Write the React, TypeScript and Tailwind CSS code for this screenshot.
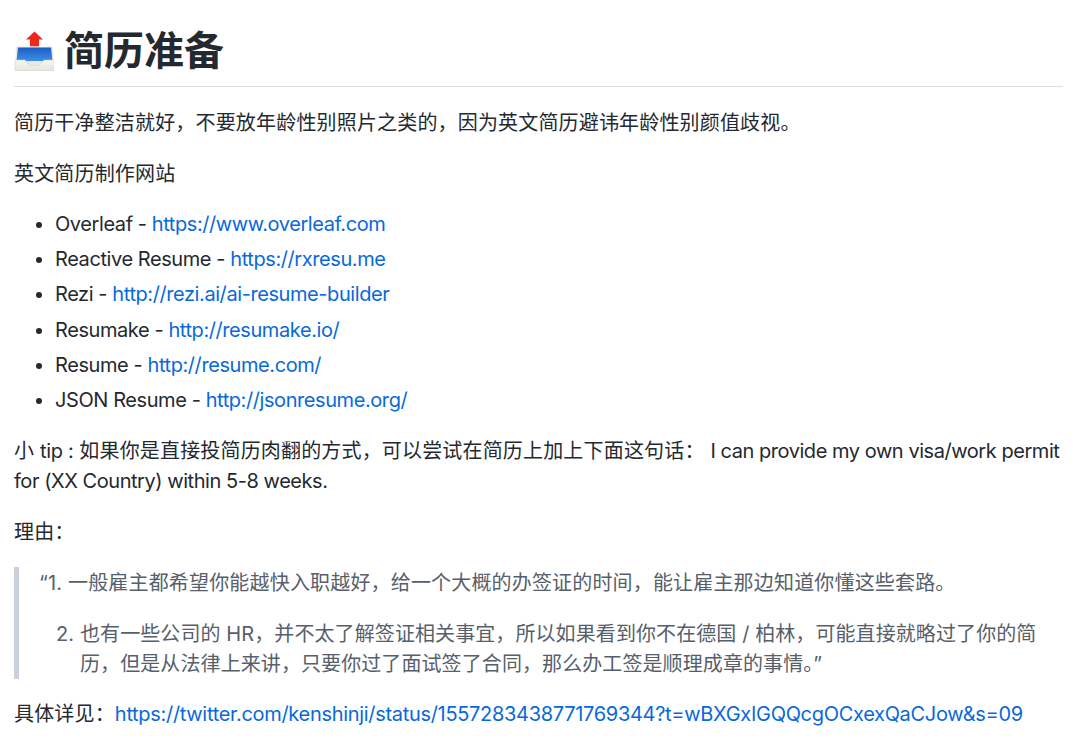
const font = { fontFamily: '"Inter", "Noto Sans CJK SC", sans-serif' };

const sites = [
  ["Overleaf", "https://www.overleaf.com"],
  ["Reactive Resume", "https://rxresu.me"],
  ["Rezi", "http://rezi.ai/ai-resume-builder"],
  ["Resumake", "http://resumake.io/"],
  ["Resume", "http://resume.com/"],
  ["JSON Resume", "http://jsonresume.org/"],
];

function InboxIcon() {
  return (
    <svg width="40" height="40" viewBox="0 0 40 40" className="shrink-0">
      <defs>
        <linearGradient id="tray" x1="0" y1="0" x2="0" y2="1">
          <stop offset="0" stopColor="#1b5cc4" />
          <stop offset="1" stopColor="#3f8fe6" />
        </linearGradient>
        <linearGradient id="front" x1="0" y1="0" x2="0" y2="1">
          <stop offset="0" stopColor="#f8f8f4" />
          <stop offset="1" stopColor="#e6e6de" />
        </linearGradient>
      </defs>
      <path d="M20.5 0.5 L29 8.5 H25 V15.5 H16 V8.5 H12 Z" fill="#f0261c" />
      <path d="M2 15.5 H39 L40 39.5 H1 Z" fill="#e9e9e2" />
      <path d="M4 16.5 H37 L38.5 30 H2.5 Z" fill="url(#tray)" />
      <path d="M1 29 H11 L15.5 34.5 H25.5 L30 29 H40 V39.5 H1 Z" fill="url(#front)" stroke="#cfcfc6" strokeWidth="0.5" />
    </svg>
  );
}

export default function App() {
  return (
    <div className="w-[1080px] h-[755px] bg-white overflow-hidden pl-[14px] pr-[17px] text-[20px] leading-[30px] tracking-[0.17px] text-[#24292f]" style={font}>
      <div className="flex items-center gap-[10px] h-[87px] border-b border-[#d8dee4] pt-[15px]">
        <InboxIcon />
        <h1 className="text-[40px] leading-[50px] font-semibold tracking-normal">简历准备</h1>
      </div>
      <p className="mt-[21px]">简历干净整洁就好，不要放年龄性别照片之类的，因为英文简历避讳年龄性别颜值歧视。</p>
      <p className="mt-[21px]">英文简历制作网站</p>
      <ul className="mt-[20px] list-disc pl-[41px] tracking-[-0.42px]">
        {sites.map(([name, url]) => (
          <li key={name} className="mb-[5.2px]">
            {name} - <a className="text-[#0969da]">{url}</a>
          </li>
        ))}
      </ul>
      <p className="mt-[21px]">
        小 <span className="tracking-[-0.3px]">tip :</span> 如果你是直接投简历肉翻的方式，可以尝试在简历上加上下面这句话： <span className="tracking-[-0.45px]">I can provide my own visa/work permit for (XX Country) within 5-8 weeks.</span>
      </p>
      <p className="mt-[21px]">理由：</p>
      <blockquote className="mt-[20px] border-l-[5px] border-[#c9d2dc] pl-[20px] pt-px text-[#57606a]">
        <p>“1. 一般雇主都希望你能越快入职越好，给一个大概的办签证的时间，能让雇主那边知道你懂这些套路。</p>
        <div className="mt-[21px] flex pl-[17px] tracking-[0.09px]">
          <span className="w-[24px] shrink-0">2.</span>
          <p>也有一些公司的 HR，并不太了解签证相关事宜，所以如果看到你不在德国 / 柏林，可能直接就略过了你的简历，但是从法律上来讲，只要你过了面试签了合同，那么办工签是顺理成章的事情。”</p>
        </div>
      </blockquote>
      <p className="mt-[20px]">
        具体详见：<a className="text-[#0969da] tracking-[-0.31px]">https://twitter.com/kenshinji/status/1557283438771769344?t=wBXGxIGQQcgOCxexQaCJow&amp;s=09</a>
      </p>
    </div>
  );
}
